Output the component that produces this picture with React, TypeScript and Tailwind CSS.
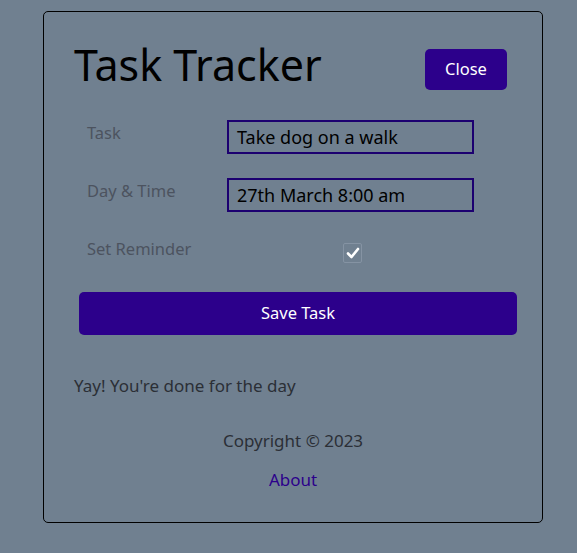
export default function App() {
  return (
    <div className="min-h-[553px] bg-[#708090] pt-[11px] font-['Noto_Sans',sans-serif]">
      <div className="ml-[43px] flex h-[512px] w-[500px] flex-col rounded-[5px] border border-black px-[30px] pt-[27px]">
        <header className="flex items-center justify-between">
          <h1 className="-translate-y-[4px] text-[43px] leading-[60px] text-black">Task Tracker</h1>
          <button className="mr-[5px] h-[41px] w-[82px] rounded-[5px] bg-[#2c008b] text-[16.5px] text-white">
            Close
          </button>
        </header>

        <form className="mt-[21px] flex flex-col">
          <div className="flex h-[34px] items-center">
            <label className="w-[153px] -translate-y-[4px] pl-[13px] text-[16.5px] text-[#4c535f]">Task</label>
            <div className="flex h-[34px] w-[247px] items-center border-2 border-[#1c0070] px-[8px] text-[18px] text-black">
              Take dog on a walk
            </div>
          </div>
          <div className="mt-[24px] flex h-[34px] items-center">
            <label className="w-[153px] -translate-y-[4px] pl-[13px] text-[16.5px] text-[#4c535f]">Day &amp; Time</label>
            <div className="flex h-[34px] w-[247px] items-center border-2 border-[#1c0070] px-[8px] text-[18px] text-black">
              27th March 8:00 am
            </div>
          </div>
          <div className="mt-[24px] flex h-[34px] items-center">
            <label className="w-[269px] -translate-y-[4px] pl-[13px] text-[16.5px] text-[#4c535f]">Set Reminder</label>
            <span className="flex h-[20px] w-[19px] items-center justify-center rounded-[2px] border border-[#8593a3]">
              <svg width="14" height="12" viewBox="0 0 14 12">
                <path d="M2 6.5 L5.5 10 L12 2" fill="none" stroke="white" strokeWidth="2.6" strokeLinecap="round" strokeLinejoin="round" />
              </svg>
            </span>
          </div>
          <button
            type="button"
            className="mt-[22px] ml-[5px] h-[43px] w-[438px] rounded-[5px] bg-[#2c008b] text-[16.5px] text-white"
          >
            Save Task
          </button>
        </form>

        <p className="mt-[38px] text-[17px] text-[#2b2f36]">Yay! You're done for the day</p>

        <footer className="mt-[29px] flex flex-col items-center text-[17px]">
          <p className="text-[#2b2f36]">Copyright © 2023</p>
          <a href="#" className="mt-[14px] text-[#2c008b]">About</a>
        </footer>
      </div>
    </div>
  );
}
